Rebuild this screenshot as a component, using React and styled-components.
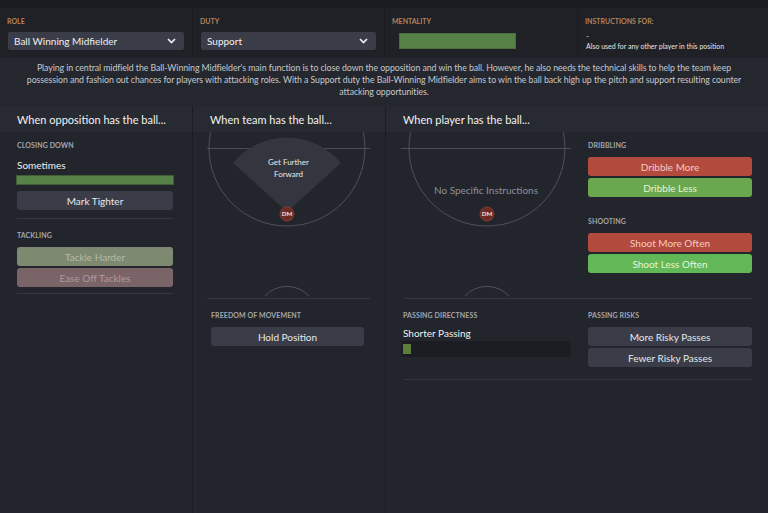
import React from 'react'
import styled, { createGlobalStyle } from 'styled-components'

const Global = createGlobalStyle`
	html, body { margin: 0; padding: 0; background: #23252c; }
	body { font-family: Lato, "Noto Sans", sans-serif; color: #e6e6e8; }
	* { box-sizing: border-box; }
`

const Page = styled.div`
	width: 768px;
	height: 513px;
	overflow: hidden;
	background: #23252c;
	border-top: 8px solid #1b1c21;
	display: flex;
	flex-direction: column;
`

const TopBar = styled.div`
	display: grid;
	grid-template-columns: 192px 192px 193px 1fr;
	height: 50px;
	background: #1f2126;
`

const TopCell = styled.div`
	padding: 8px 8px 0 8px;
	border-left: ${p => (p.first ? 'none' : '1px solid #1a1b1f')};
	display: flex;
	flex-direction: column;
`

const TopLabel = styled.div`
	font-size: 7px;
	font-weight: 700;
	color: #b5845a;
	text-transform: uppercase;
	height: 10px;
	line-height: 10px;
	margin-left: -1px;
`

const Select = styled.div`
	margin-top: 6px;
	height: 18px;
	background: #3a3d47;
	border-radius: 2px;
	display: flex;
	align-items: center;
	justify-content: space-between;
	padding: 0 8px 0 6px;
	font-size: 10px;
	color: #f0f0f0;
`

const MentalityBar = styled.div`
	margin: 7px 0 0 6px;
	width: 117px;
	height: 16px;
	background: #578247;
	border: 1px solid #4a6d3c;
`

const Dash = styled.div`
	margin-top: 6px;
	font-size: 8px;
	line-height: 8px;
	color: #e0e0e0;
`

const Small = styled.div`
	font-size: 7px;
	line-height: 10px;
	color: #e6e6e6;
	margin-top: 1px;
`

const Description = styled.div`
	background: #25272e;
	height: 48px;
	padding: 4px 16px 0;
	font-size: 8.8px;
	letter-spacing: -0.08px;
	line-height: 12px;
	text-align: center;
	color: #c6c7cb;
`

const Columns = styled.div`
	flex: 1;
	display: grid;
	grid-template-columns: 192px 193px 1fr;
`

const Column = styled.div`
	border-left: ${p => (p.first ? 'none' : '1px solid #1c1d22')};
	display: flex;
	flex-direction: column;
	min-width: 0;
`

const ColHead = styled.div`
	height: 26px;
	background: #282a31;
	display: flex;
	align-items: center;
	padding-left: 17px;
	font-size: 11px;
	color: #f2f2f2;
`

const Body = styled.div`
	padding: ${p => p.pad || '0 18px'};
`

const Section = styled.div`
	padding: ${p => p.pad || '8px 0 7px'};
	border-bottom: ${p => (p.line ? '1px solid #343740' : 'none')};
	display: flex;
	flex-direction: column;
	gap: 2px;
`

const Label = styled.div`
	font-size: 7px;
	font-weight: 700;
	letter-spacing: 0.1px;
	color: #a3a5ab;
	text-transform: uppercase;
	height: 10px;
	line-height: 10px;
	margin-bottom: ${p => p.mb || 0};
`

const Value = styled.div`
	font-size: 10px;
	color: #f0f0f0;
	height: 14px;
	line-height: 14px;
`

const Slider = styled.div`
	height: ${p => p.h || 10}px;
	background: ${p => p.bg || '#578247'};
	border: 1px solid ${p => p.border || '#3f5f33'};
	margin: ${p => p.m || 0};
	position: relative;
`

const Fill = styled.div`
	position: absolute;
	left: 1px;
	top: 2px;
	bottom: 2px;
	background: #5e7d3c;
`

const tones = {
	plain: ['#3a3d47', '#e8e8ea'],
	green: ['#6aa84f', '#e4f4d8'],
	bright: ['#62b756', '#e4f6de'],
	red: ['#b24b3e', '#f7c9c4'],
	mutedGreen: ['#7d8970', '#b4bba8'],
	mutedRed: ['#7b6467', '#b09a9c'],
}

const Button = styled.div`
	height: 19px;
	flex: none;
	border-radius: 3px;
	display: flex;
	align-items: center;
	justify-content: center;
	font-size: 10px;
	background: ${p => tones[p.tone || 'plain'][0]};
	color: ${p => tones[p.tone || 'plain'][1]};
`

const Split = styled.div`
	display: grid;
	grid-template-columns: 170px 164px;
	column-gap: 17px;
	padding: 0 17px 0 15px;
`

const Divider = styled.div`
	grid-column: 1 / -1;
	height: 1px;
	background: #343740;
	margin-left: 3px;
`

const PitchBox = styled.div`
	position: relative;
	height: 166px;
`

const PitchText = styled.div`
	position: absolute;
	left: 0;
	right: 0;
	top: ${p => p.top}px;
	text-align: center;
	font-size: ${p => p.size || 8}px;
	line-height: 12px;
	color: ${p => p.color || '#e8e8e8'};
`

const Chevron = () => (
	<svg width="9" height="6" viewBox="0 0 9 6">
		<path d="M1 1 L4.5 4.5 L8 1" fill="none" stroke="#f0f0f0" strokeWidth="1.6" />
	</svg>
)

const Pitch = ({ w, cx, wedge, children }) => (
	<PitchBox>
		<svg width={w} height="166" viewBox={`0 0 ${w} 166`} style={{ position: 'absolute', left: 0, top: 0 }}>
			<line x1="0" y1="16.5" x2={w} y2="16.5" stroke="#4a4d56" strokeWidth="1" />
			<circle cx={cx} cy="16" r="78" fill="none" stroke="#4f525b" strokeWidth="1" />
			{wedge && (
				<path d={`M${cx} 80 L${cx - 54} 31 A70 70 0 0 1 ${cx + 54} 31 Z`} fill="#33363e" />
			)}
			<path d={`M${cx - 22} 164 A30 30 0 0 1 ${cx + 22} 164`} fill="none" stroke="#4f525b" strokeWidth="1" />
			<circle cx={cx} cy="82" r="7" fill="#6e2a26" stroke="#8a4430" strokeWidth="0.8" />
			<text x={cx} y="84.3" textAnchor="middle" fontSize="6.2" fontWeight="700" fill="#f0e0dc" fontFamily="Lato, sans-serif">DM</text>
		</svg>
		{children}
	</PitchBox>
)

export default function App() {
	return (
		<Page>
			<Global />
			<TopBar>
				<TopCell first>
					<TopLabel>Role</TopLabel>
					<Select>
						<span>Ball Winning Midfielder</span>
						<Chevron />
					</Select>
				</TopCell>
				<TopCell>
					<TopLabel>Duty</TopLabel>
					<Select>
						<span>Support</span>
						<Chevron />
					</Select>
				</TopCell>
				<TopCell>
					<TopLabel>Mentality</TopLabel>
					<MentalityBar />
				</TopCell>
				<TopCell>
					<TopLabel>Instructions For:</TopLabel>
					<Dash>-</Dash>
					<Small>Also used for any other player in this position</Small>
				</TopCell>
			</TopBar>

			<Description>
				Playing in central midfield the Ball-Winning Midfielder's main function is to close down the opposition and win the ball. However, he also needs the technical skills to help the team keep possession and fashion out chances for players with attacking roles. With a Support duty the Ball-Winning Midfielder aims to win the ball back high up the pitch and support resulting counter attacking opportunities.
			</Description>

			<Columns>
				<Column first>
					<ColHead>When opposition has the ball...</ColHead>
					<Body pad="0 19px 0 17px">
						<Section line pad="8px 0 8px">
							<Label mb="6px">Closing Down</Label>
							<Value>Sometimes</Value>
							<Slider h={10} m="1px -1px 4px" />
							<Button>Mark Tighter</Button>
						</Section>
						<Section line pad="11px 0 6px">
							<Label mb="5px">Tackling</Label>
							<Button tone="mutedGreen">Tackle Harder</Button>
							<Button tone="mutedRed">Ease Off Tackles</Button>
						</Section>
					</Body>
				</Column>

				<Column>
					<ColHead>When team has the ball...</ColHead>
					<Body pad="0 15px 0 14px">
						<Section line pad="0">
							<Pitch w={163} cx={80} wedge>
								<PitchText top={24}>Get Further<br />Forward</PitchText>
							</Pitch>
						</Section>
						<Section pad="11px 6px 0 4px">
							<Label mb="5px">Freedom of Movement</Label>
							<Button>Hold Position</Button>
						</Section>
					</Body>
				</Column>

				<Column>
					<ColHead>When player has the ball...</ColHead>
					<Split>
						<Pitch w={170} cx={86}>
							<PitchText top={52} size={10} color="#8e9097">No Specific Instructions</PitchText>
						</Pitch>
						<div>
							<Section pad="8px 0 0">
								<Label mb="5px">Dribbling</Label>
								<Button tone="red">Dribble More</Button>
								<Button tone="green">Dribble Less</Button>
							</Section>
							<Section pad="19px 0 0">
								<Label mb="5px">Shooting</Label>
								<Button tone="red">Shoot More Often</Button>
								<Button tone="bright">Shoot Less Often</Button>
							</Section>
						</div>
						<Divider />
						<Section pad="11px 0 12px 2px">
							<Label mb="4px">Passing Directness</Label>
							<Value>Shorter Passing</Value>
							<Slider h={16} bg="#1c1d22" border="#1c1d22" m="-1px 0 0 -2px">
								<Fill style={{ width: '8px' }} />
							</Slider>
						</Section>
						<Section pad="11px 0 12px">
							<Label mb="5px">Passing Risks</Label>
							<Button>More Risky Passes</Button>
							<Button>Fewer Risky Passes</Button>
						</Section>
						<Divider />
					</Split>
				</Column>
			</Columns>
		</Page>
	)
}
